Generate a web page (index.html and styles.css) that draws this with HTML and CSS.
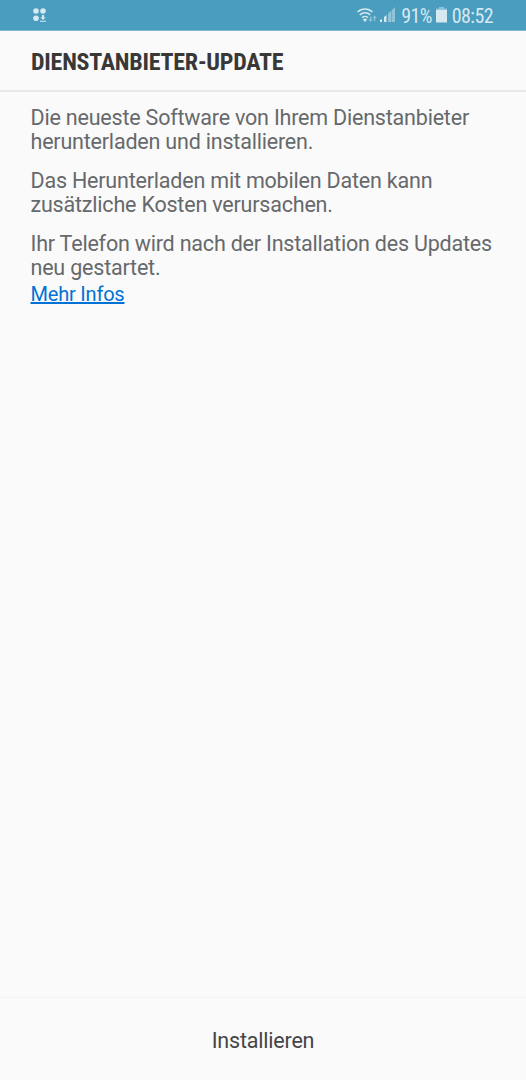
FILE: index.html
```
<!DOCTYPE html>
<html lang="de">
<head>
    <meta charset="UTF-8">
    <meta name="viewport" content="width=device-width, initial-scale=1.0">
    <title>Dienstanbieter-Update</title>
    <link rel="stylesheet" href="styles.css">
</head>
<body>
    <div class="status-bar">
        <svg class="icon-apps" width="14" height="15" viewBox="0 0 14 15">
            <circle cx="3" cy="3" r="2.8"/>
            <circle cx="10" cy="3" r="2.8"/>
            <circle cx="3" cy="10.300" r="2.8"/>
            <path d="M9 7h2v2.300h1.700L10 12 7.300 9.300H9zM7 12.700h6v1.100H7z"/>
        </svg>
        <div class="status-right">
            <svg class="icon-wifi" width="20" height="16" viewBox="0 0 20 16">
                <g fill="none" stroke="#d5e9f1" stroke-width="1.500">
                    <path d="M0.600 5a10.500 10.500 0 0 1 14.800 0"/>
                    <path d="M2.800 7.900a7.400 7.400 0 0 1 10.400 0"/>
                    <path d="M5.200 10.600a4 4 0 0 1 5.600 0"/>
                </g>
                <path d="M5.800 12.600a3 3 0 0 1 4.400 0L8 15z"/>
                <path class="dim" d="M13 9.500h1.300v3h1.500l-2.150 2.500-2.150-2.500H13zM17.600 8.500l2.100 2.500h-1.400v3H17v-3h-1.500z"/>
            </svg>
            <svg class="icon-signal" width="16" height="16" viewBox="0 0 16 16">
                <path d="M0 12.500h2V15H0zM4 10l2.500-2v7H4z"/>
                <path class="dim" d="M8 6.500L11 4v11H8zM11.500 3.500L15 0v15h-3.500z"/>
            </svg>
            <span class="battery-text">91%</span>
            <svg class="icon-battery" width="11" height="16" viewBox="0 0 11 16">
                <path class="dim" d="M3 0h5v1.500h3V4H0V1.500h3z"/>
                <path d="M0 3h11v12.500H0z"/>
            </svg>
            <span class="clock">08:52</span>
        </div>
    </div>
    <header class="header">
        <h1>DIENSTANBIETER-UPDATE</h1>
    </header>
    <main class="content">
        <p>Die neueste Software von Ihrem Dienstanbieter<br>herunterladen und installieren.</p>
        <p>Das Herunterladen mit mobilen Daten kann<br>zusätzliche Kosten verursachen.</p>
        <p>Ihr Telefon wird nach der Installation des Updates<br>neu gestartet.</p>
        <a href="#" class="more">Mehr Infos</a>
    </main>
    <footer class="footer">
        <button class="install">Installieren</button>
    </footer>
</body>
</html>
```
FILE: styles.css
```
* {
    box-sizing: border-box;
}
body {
    margin: 0;
    height: 1080px;
    display: flex;
    flex-direction: column;
    background-color: #fafafa;
    font-family: Roboto, sans-serif;
    overflow: hidden;
}
.status-bar {
    height: 31px;
    flex: none;
    display: flex;
    justify-content: space-between;
    align-items: flex-start;
    padding: 0 33px;
    background-color: #4a9dbe;
    border-bottom: 1px solid #7db9d0;
    color: #d5e9f1;
}
.status-bar svg {
    fill: #d5e9f1;
    flex: none;
}
.status-bar .dim {
    fill: #8fc3d8;
}
.icon-apps {
    margin-top: 8px;
}
.status-right {
    display: flex;
    align-items: flex-start;
    font-family: "Roboto Condensed", Roboto, sans-serif;
    font-stretch: 75%;
    font-size: 20px;
    letter-spacing: -0.600px;
    line-height: 32px;
}
.icon-wifi {
    margin-top: 7px;
}
.icon-signal {
    margin: 7px 5px 0 3px;
}
.icon-battery {
    margin: 7px 5px 0 4px;
}
.header {
    height: 61px;
    flex: none;
    padding: 0 31px;
    border-bottom: 2px solid #e9e9e9;
}
h1 {
    margin: 0;
    font-family: "Roboto Condensed", Roboto, sans-serif;
    font-stretch: 75%;
    font-size: 24px;
    font-weight: 700;
    letter-spacing: -0.230px;
    line-height: 63px;
    color: #383838;
    white-space: nowrap;
}
.content {
    flex: 1;
    padding: 14px 30.500px 0;
    color: #66696c;
}
p {
    margin: 0 0 15px;
    font-size: 21.500px;
    letter-spacing: -0.200px;
    line-height: 24px;
    white-space: nowrap;
}
p:last-of-type {
    margin-bottom: 2px;
}
.more {
    display: block;
    font-size: 20px;
    letter-spacing: -0.200px;
    line-height: 24px;
    color: #0072d6;
    text-decoration-thickness: 1.500px;
}
.footer {
    height: 83px;
    flex: none;
    border-top: 1px solid #f2f2f2;
}
.install {
    display: block;
    width: 100%;
    height: 100%;
    padding: 2px 0 0;
    border: none;
    background: none;
    font-family: inherit;
    font-size: 21.500px;
    letter-spacing: -0.200px;
    color: #454545;
}
```
